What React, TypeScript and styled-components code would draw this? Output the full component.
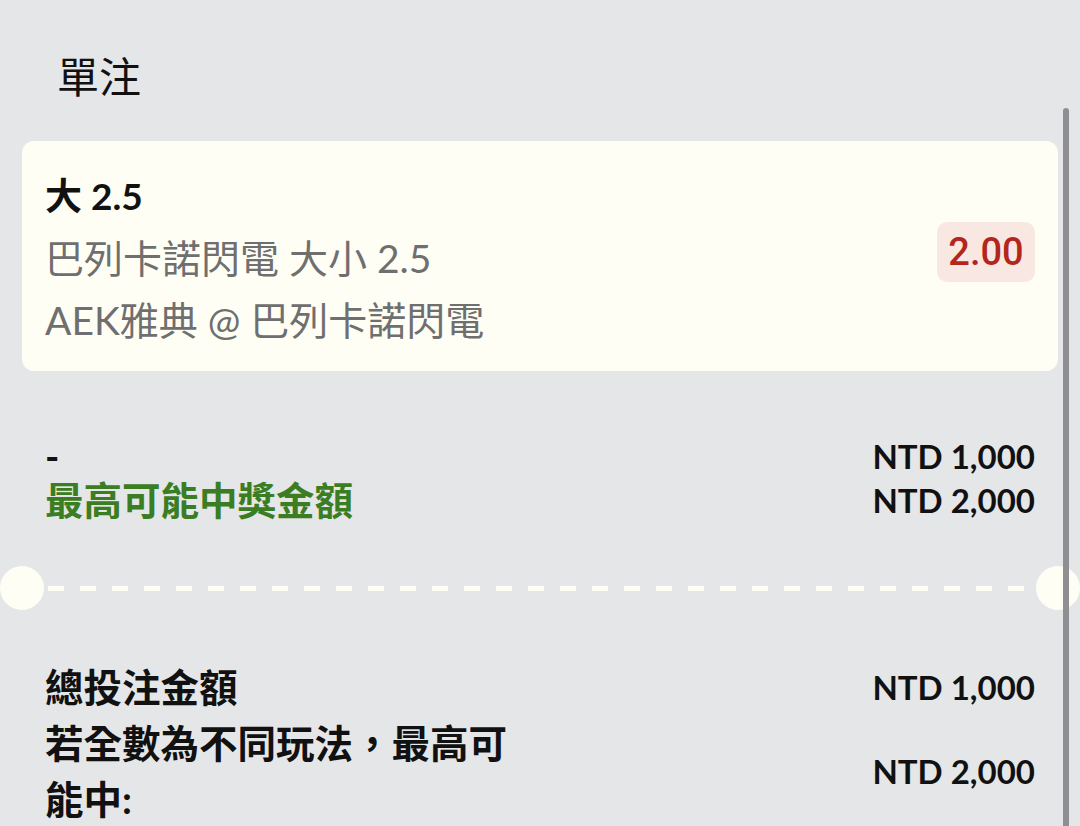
import styled, { createGlobalStyle } from "styled-components"

const GlobalStyle = createGlobalStyle`
    html, body {
        margin: 0;
        padding: 0;
        background: #e5e6e8;
    }
    body {
        font-family: Lato, "Noto Sans CJK TC", sans-serif;
        color: #111111;
        overflow: hidden;
    }
`

const Page = styled.div`
    height: 826px;
    overflow: hidden;
    padding-top: 47px;
    box-sizing: border-box;
    position: relative;
`

const Title = styled.h1`
    margin: 0 0 34px 57px;
    font-size: 42px;
    font-weight: 400;
    line-height: 60px;
`

const BetCard = styled.div`
    margin: 0 22px;
    height: 230px;
    box-sizing: border-box;
    padding: 24px 23px 18px;
    background: #fffef5;
    border-radius: 12px;
    display: flex;
    align-items: center;
    justify-content: space-between;
`

const BetInfo = styled.div`
    display: flex;
    flex-direction: column;
    align-self: stretch;
`

const Selection = styled.div`
    font-size: 37px;
    font-weight: 700;
    line-height: 62px;
`

const Detail = styled.div`
    font-size: 39px;
    line-height: 62px;
    color: #6f6f6f;
`

const OddsBadge = styled.div`
    width: 98px;
    height: 60px;
    border-radius: 10px;
    background: #f9e8e1;
    display: flex;
    align-items: center;
    justify-content: center;
    font-family: Roboto, sans-serif;
    font-weight: 500;
    font-size: 38px;
    color: #b3261e;
    margin-top: -14px;
`

const Summary = styled.div<{ $top: number }>`
    margin-top: ${p => p.$top}px;
    padding: 0 45px;
    display: flex;
    justify-content: space-between;
`

const Labels = styled.div<{ $lineHeight: number }>`
    display: flex;
    flex-direction: column;
    font-size: 38.5px;
    font-weight: 700;
    line-height: ${p => p.$lineHeight}px;
`

const Label = styled.div<{ $green?: boolean }>`
    color: ${p => (p.$green ? "#3b7d23" : "#111111")};
    max-width: 470px;
`

const Amounts = styled.div<{ $lineHeight: number }>`
    display: flex;
    flex-direction: column;
    align-items: flex-end;
    font-size: 33px;
    font-weight: 700;
    line-height: ${p => p.$lineHeight}px;
`

const Amount = styled.div<{ $height?: number }>`
    height: ${p => (p.$height ? `${p.$height}px` : "auto")};
    display: flex;
    align-items: center;
`

const Divider = styled.div`
    margin-top: 44px;
    display: flex;
    align-items: center;
`

const Notch = styled.div`
    width: 44px;
    height: 44px;
    border-radius: 50%;
    background: #fffef5;
    flex-shrink: 0;
`

const Dashes = styled.div`
    flex: 1;
    height: 5px;
    margin: 0 4px;
    background: repeating-linear-gradient(
        to right,
        #fffef5 0,
        #fffef5 16px,
        transparent 16px,
        transparent 32px
    );
`

const ScrollIndicator = styled.div`
    position: absolute;
    top: 108px;
    right: 11px;
    bottom: 0;
    width: 6px;
    border-radius: 3px 3px 0 0;
    background: #8f8f93;
`

export default function App() {
    return (
        <Page>
            <GlobalStyle />
            <Title>單注</Title>
            <BetCard>
                <BetInfo>
                    <Selection>大 2.5</Selection>
                    <Detail>巴列卡諾閃電 大小 2.5</Detail>
                    <Detail>AEK雅典 @ 巴列卡諾閃電</Detail>
                </BetInfo>
                <OddsBadge>2.00</OddsBadge>
            </BetCard>

            <Summary $top={63}>
                <Labels $lineHeight={44}>
                    <Label>-</Label>
                    <Label $green>最高可能中獎金額</Label>
                </Labels>
                <Amounts $lineHeight={44}>
                    <Amount>NTD 1,000</Amount>
                    <Amount>NTD 2,000</Amount>
                </Amounts>
            </Summary>

            <Divider>
                <Notch />
                <Dashes />
                <Notch />
            </Divider>

            <Summary $top={49}>
                <Labels $lineHeight={56}>
                    <Label>總投注金額</Label>
                    <Label>若全數為不同玩法，最高可能中:</Label>
                </Labels>
                <Amounts $lineHeight={56}>
                    <Amount $height={56}>NTD 1,000</Amount>
                    <Amount $height={112}>NTD 2,000</Amount>
                </Amounts>
            </Summary>
            <ScrollIndicator />
        </Page>
    )
}
